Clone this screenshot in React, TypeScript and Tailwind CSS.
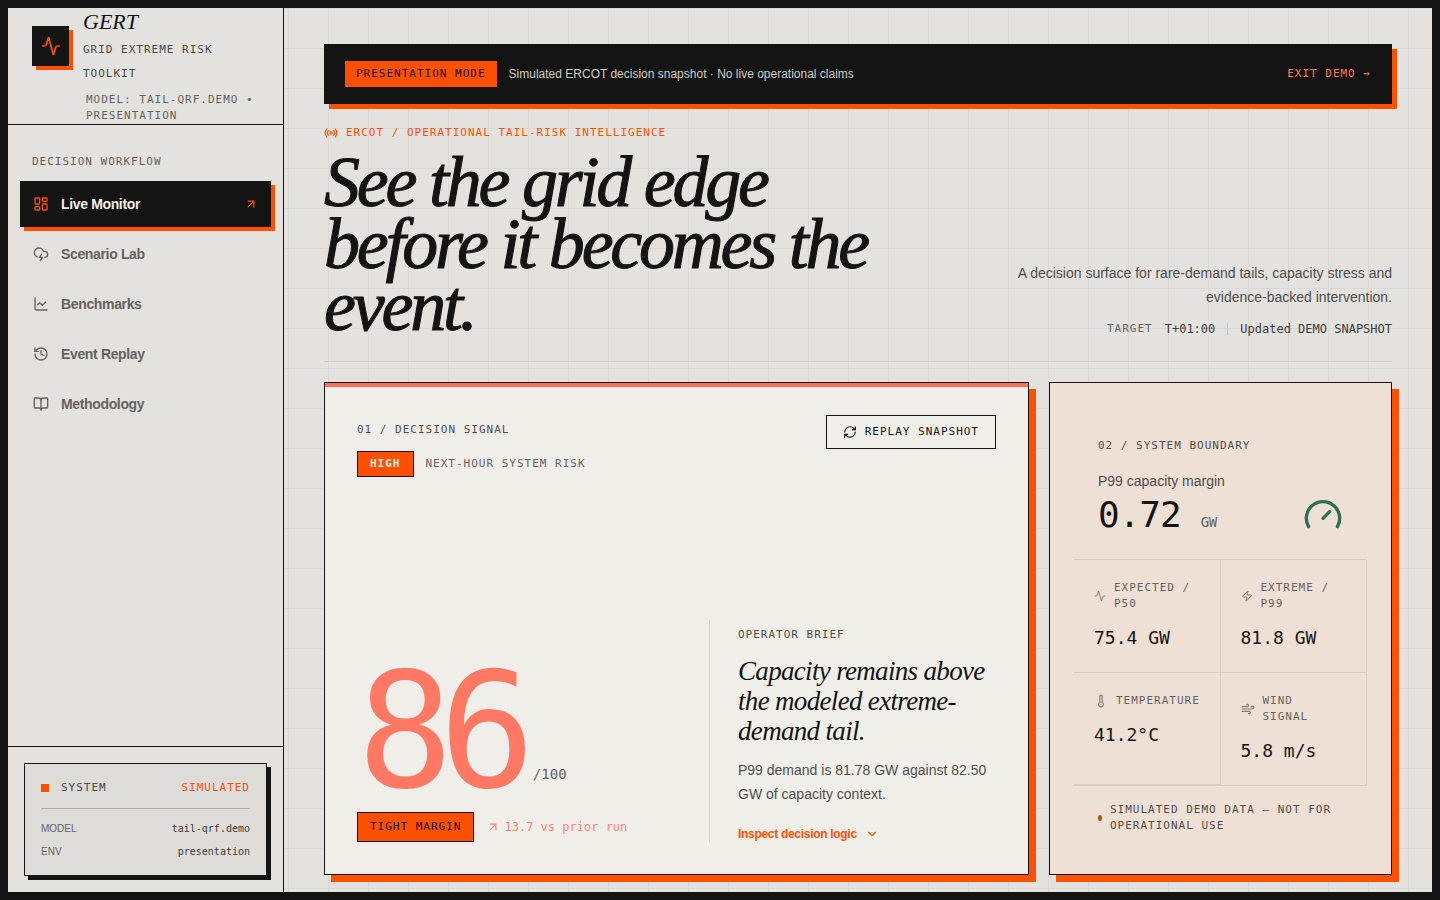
import {
  Activity,
  ArrowUpRight,
  BookOpen,
  ChartLine,
  ChevronDown,
  CloudLightning,
  Gauge,
  History,
  LayoutDashboard,
  Radio,
  RefreshCw,
  Thermometer,
  Wind,
  Zap,
  type LucideIcon,
} from "lucide-react";
import clsx from "clsx";

const mono = "font-['DejaVu_Sans_Mono',monospace]";
const serif = "font-['Georgia','Liberation_Serif',serif] italic";
const label = clsx(mono, "text-[11px] tracking-[1px] uppercase");

const navItems: { title: string; icon: LucideIcon; active?: boolean }[] = [
  { title: "Live Monitor", icon: LayoutDashboard, active: true },
  { title: "Scenario Lab", icon: CloudLightning },
  { title: "Benchmarks", icon: ChartLine },
  { title: "Event Replay", icon: History },
  { title: "Methodology", icon: BookOpen },
];

const metrics: { title: string; value: string; icon: LucideIcon; iconClass: string }[] = [
  { title: "Expected / P50", value: "75.4 GW", icon: Activity, iconClass: "w-3" },
  { title: "Extreme / P99", value: "81.8 GW", icon: Zap, iconClass: "w-3" },
  { title: "Temperature", value: "41.2°C", icon: Thermometer, iconClass: "w-3.5" },
  { title: "Wind signal", value: "5.8 m/s", icon: Wind, iconClass: "w-3.5" },
];

function Sidebar() {
  return (
    <aside className="flex w-[276px] shrink-0 flex-col border-r border-[#141414] bg-[#e4e2de]">
      <div className="border-b border-[#141414] pt-1 pl-6">
        <div className="flex items-start gap-3.5">
          <div className="mt-3.5 flex h-10 w-[37px] shrink-0 items-center justify-center bg-[#141414] text-[#ff4f00] shadow-[4px_4px_0_#ff4f00]">
            <Activity className="h-5 w-5" />
          </div>
          <div>
            <p className={clsx(serif, "text-[22px] leading-5")}>GERT</p>
            <p className={clsx(label, "mt-1.5 max-w-40 leading-6 text-[#4b4a47]")}>
              Grid extreme risk toolkit
            </p>
          </div>
        </div>
        <p className={clsx(label, "mt-1.5 pl-[54px] leading-4 text-[#65635f]")}>
          Model: tail-qrf.demo • presentation
        </p>
      </div>

      <nav className="flex-1 px-3 pt-[29px]" aria-label="Decision workflow">
        <p className={clsx(label, "px-3 leading-4 text-[#65635f]")}>Decision workflow</p>
        <ul className="mt-[11px] flex flex-col gap-1">
          {navItems.map(({ title, icon: Icon, active }) => (
            <li key={title}>
              <a
                href="#"
                aria-current={active ? "page" : undefined}
                className={clsx(
                  "flex h-[46px] items-center gap-3 px-[13px] text-sm font-bold tracking-tight",
                  active
                    ? "bg-[#141414] text-[#f0eee9] shadow-[4px_4px_0_#ff4f00]"
                    : "text-[#65635f]",
                )}
              >
                <Icon className={clsx("h-4 w-4", active && "text-[#ff4f00]")} />
                <span className="flex-1">{title}</span>
                {active && <ArrowUpRight className="h-3.5 w-3.5 text-[#ff4f00]" />}
              </a>
            </li>
          ))}
        </ul>
      </nav>

      <div className="border-t border-[#141414] p-4">
        <div className="border border-[#141414] bg-[#dedcd8] px-4 pt-4 pb-[15px] shadow-[4px_4px_0_#141414]">
          <div className="flex items-center gap-3 border-b border-[#b0aeaa] pb-3">
            <span className="h-2 w-2 bg-[#ff4f00]" />
            <span className={clsx(label, "flex-1 leading-4 text-[#4b4a47]")}>System</span>
            <span className={clsx(label, "leading-4 text-[#ff4f00]")}>Simulated</span>
          </div>
          <dl className="flex flex-col gap-[7px] pt-3 text-[10px] leading-4">
            <div className="flex justify-between">
              <dt className="text-[#65635f]">MODEL</dt>
              <dd className={clsx(mono, "text-[#3d3c39]")}>tail-qrf.demo</dd>
            </div>
            <div className="flex justify-between">
              <dt className="text-[#65635f]">ENV</dt>
              <dd className={clsx(mono, "text-[#3d3c39]")}>presentation</dd>
            </div>
          </dl>
        </div>
      </div>
    </aside>
  );
}

function DemoBanner() {
  return (
    <div className="flex h-[60px] items-center gap-3 bg-[#141414] px-[21px] shadow-[5px_5px_0_#ff4f00]">
      <span className={clsx(label, "bg-[#ff4f00] px-[11px] leading-[26px] text-[#141414]")}>
        Presentation mode
      </span>
      <p className="flex-1 text-xs text-[#cfcdc8]">
        Simulated ERCOT decision snapshot · No live operational claims
      </p>
      <a href="#" className={clsx(label, "text-[#ff7a45]")}>
        Exit demo →
      </a>
    </div>
  );
}

function PageHeader() {
  return (
    <header className="flex items-end justify-between border-b border-[#cfcdc9] pt-[21px] pb-6">
      <div>
        <p className={clsx(label, "flex items-center gap-2 leading-4 text-[#ff4f00]")}>
          <Radio className="h-3.5 w-3.5" />
          ERCOT / Operational tail-risk intelligence
        </p>
        <h1
          className={clsx(
            serif,
            "mt-2.5 max-w-[580px] text-[72px] leading-[62px] tracking-[-0.045em] [-webkit-text-stroke:1px_currentColor]",
          )}
        >
          See the grid edge before it becomes the event.
        </h1>
      </div>
      <div className="max-w-[400px] text-right">
        <p className="text-sm leading-6 text-[#4f4e4a]">
          A decision surface for rare-demand tails, capacity stress and evidence-backed
          intervention.
        </p>
        <div
          className={clsx(mono, "mt-3 flex items-center justify-end gap-3 text-xs leading-4 text-[#3d3c39]")}
        >
          <span className="text-[11px] tracking-[1px] text-[#65635f]">TARGET</span>
          <span>T+01:00</span>
          <span className="h-3 w-px bg-[#c4c2be]" />
          <span>Updated DEMO SNAPSHOT</span>
        </div>
      </div>
    </header>
  );
}

function DecisionSignal() {
  return (
    <section className="flex flex-col justify-between border border-[#141414] bg-[#f0eee9] shadow-[7px_7px_0_#ff4f00]">
      <div className="border-t-4 border-[#ff6f5b] px-8 pt-7">
        <div className="flex items-start justify-between">
          <div>
            <h2 className={clsx(label, "leading-[30px] text-[#4f4e4a]")}>01 / Decision signal</h2>
            <div className="mt-1.5 flex items-center gap-3">
              <span
                className={clsx(
                  label,
                  "border border-[#141414] bg-[#ff4f00] px-3 leading-6 font-bold text-[#f0eee9]",
                )}
              >
                High
              </span>
              <span className={clsx(label, "text-[#65635f]")}>Next-hour system risk</span>
            </div>
          </div>
          <button
            className={clsx(label, "flex h-[34px] items-center gap-2 border border-[#141414] px-4")}
          >
            <RefreshCw className="h-3.5 w-3.5" />
            Replay snapshot
          </button>
        </div>
      </div>

      <div className="grid grid-cols-[352fr_287fr] px-8 pb-8">
        <div className="flex flex-col justify-end">
          <div className="flex items-end gap-3">
            <span
              className={clsx(mono, "text-[160px] leading-[128px] tracking-[-0.09em] text-[#ff7864]")}
            >
              86
            </span>
            <span className={clsx(mono, "pb-3 text-sm text-[#65635f]")}>/100</span>
          </div>
          <div className="mt-4 flex items-center gap-3">
            <span
              className={clsx(label, "border border-[#141414] bg-[#ff4f00] px-3 leading-7 text-[#141414]")}
            >
              Tight margin
            </span>
            <span className={clsx(mono, "flex items-center gap-1 text-xs text-[#ff8573]")}>
              <ArrowUpRight className="h-3.5 w-3.5" />
              13.7 vs prior run
            </span>
          </div>
        </div>

        <div className="border-l border-[#d6d4d0] pl-7">
          <h3 className={clsx(label, "leading-[30px] text-[#4f4e4a]")}>Operator brief</h3>
          <p className={clsx(serif, "mt-1.5 text-[27px] leading-[30px] tracking-tight")}>
            Capacity remains above the modeled extreme-demand tail.
          </p>
          <p className="mt-3 text-sm leading-6 text-[#4f4e4a]">
            P99 demand is 81.78 GW against 82.50 GW of capacity context.
          </p>
          <button className="mt-5 flex items-center gap-2 text-xs leading-4 font-bold tracking-tight text-[#ff4f00]">
            Inspect decision logic
            <ChevronDown className="h-3.5 w-3.5" />
          </button>
        </div>
      </div>
    </section>
  );
}

function SystemBoundary() {
  return (
    <section className="border border-[#141414] bg-[#eee0d5] p-6 shadow-[7px_7px_0_#ff4f00]">
      <div className="p-6">
        <h2 className={clsx(label, "leading-[30px] text-[#4f4e4a]")}>02 / System boundary</h2>
        <p className="mt-2.5 text-sm text-[#4f4e4a]">P99 capacity margin</p>
        <div className="mt-1 flex items-center justify-between">
          <p className={clsx(mono, "flex items-baseline gap-5")}>
            <span className="text-4xl tracking-[-1px]">0.72</span>
            <span className="text-sm tracking-tight text-[#65635f]">GW</span>
          </p>
          <Gauge className="h-10 w-10 text-[#2d6f4e]" />
        </div>
      </div>

      <div className="grid grid-cols-2 border-y border-[#d9ccc2]">
        {metrics.map(({ title, value, icon: Icon, iconClass }) => (
          <div
            key={title}
            className="border-r border-b border-[#d9ccc2] p-5 last:border-b-0"
          >
            <p className={clsx(label, "flex items-center gap-2 leading-4 text-[#65635f]")}>
              <Icon className={clsx("h-3.5 shrink-0 opacity-80", iconClass)} />
              <span>{title}</span>
            </p>
            <p className={clsx(mono, "mt-3 text-lg leading-7")}>{value}</p>
          </div>
        ))}
      </div>

      <div className="flex items-center gap-2 px-6 py-4">
        <span className="h-1.5 w-1 shrink-0 rounded-full bg-[#9a6400]" />
        <p className={clsx(label, "leading-4 text-[#4f4e4a]")}>
          Simulated demo data — not for operational use
        </p>
      </div>
    </section>
  );
}

export default function App() {
  return (
    <div className="flex min-h-screen border-8 border-[#141414] bg-[#e4e2de] bg-[linear-gradient(#d9d8d4_1px,transparent_1px),linear-gradient(90deg,#d9d8d4_1px,transparent_1px)] bg-size-[40px_40px] font-['Helvetica_Neue','Liberation_Sans',sans-serif] text-[#141414]">
      <Sidebar />
      <main className="min-w-0 flex-1 px-10 pt-9 pb-4">
        <DemoBanner />
        <PageHeader />
        <div className="mt-5 grid grid-cols-[minmax(0,705fr)_minmax(0,343fr)] gap-5">
          <DecisionSignal />
          <SystemBoundary />
        </div>
      </main>
    </div>
  );
}
